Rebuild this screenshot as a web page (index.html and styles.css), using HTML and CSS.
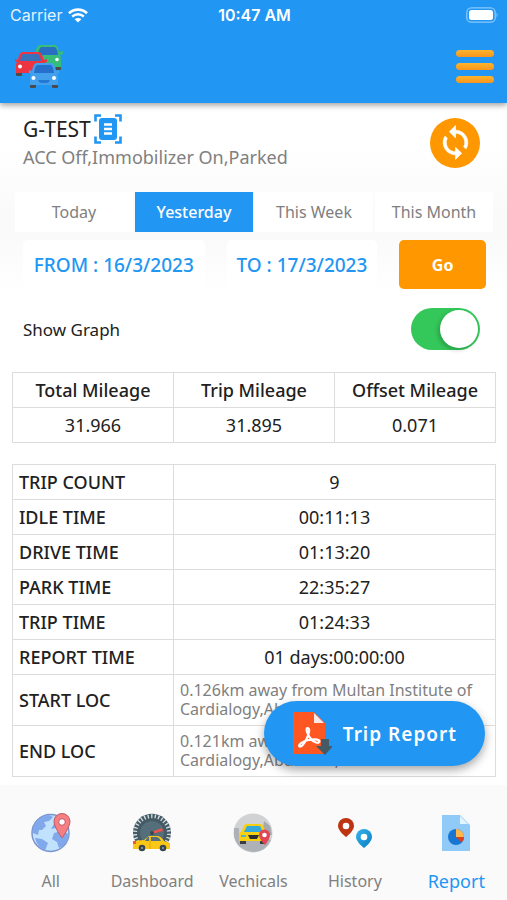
FILE: index.html
```html
<!DOCTYPE html>
<html lang="en">
<head>
<meta charset="utf-8">
<meta name="viewport" content="width=device-width, initial-scale=1">
<title>Trip Report</title>
<link rel="stylesheet" href="styles.css">
</head>
<body>
<header class="header">
  <div class="status">
    <div class="carrier"><span>Carrier</span>
      <svg width="20" height="15" viewBox="0 0 20 15" fill="none" stroke="#fff" stroke-width="2.6"><path d="M1 5.2a13 13 0 0 1 18 0M4.2 8.6a8.4 8.4 0 0 1 11.6 0"/><path d="M10 14.6 6.7 11.300a4.700 4.700 0 0 1 6.600 0z" fill="#fff" stroke="none"/></svg>
    </div>
    <span class="clock">10:47 AM</span>
    <svg class="battery" width="33" height="16" viewBox="0 0 33 16"><rect x=".8" y=".8" width="28.400" height="14.400" rx="4.500" fill="none" stroke="#8bc8fa" stroke-width="1.300"/><rect x="3" y="3" width="24" height="10" rx="2.500" fill="#fff"/><path d="M30.500 5.500q2 2.500 0 5z" fill="#8bc8fa"/></svg>
  </div>
  <div class="appbar">
    <svg width="50" height="44" viewBox="0 0 50 44">
      <g fill="#36bd79"><path d="M25 0h15q3 0 4 7l4-1v3l-3 1q1 2 1 5v10H26L20 10q1-10 5-10z"/></g>
      <path d="M26 2h14q2 1 3 8H23q1-7 3-8z" fill="#286fc4"/>
      <rect x="40" y="22" width="6" height="3" rx="1" fill="#4a4a4a"/><circle cx="42" cy="14.500" r="1.800" fill="#fff"/>
      <rect x="1" y="27" width="6" height="4" rx="1" fill="#4a4a4a"/>
      <path d="M7 7h17q3 1 5 8l3-1v3l-3 1v10H1V19l1-2-3-1v-2l4 1q1-7 4-8z" fill="#ed3442"/>
      <path d="M8 9h15q2 1 3 7H5q1-6 3-7z" fill="#3773bd"/><circle cx="5" cy="21.500" r="2" fill="#fff"/>
      <rect x="15" y="39" width="6" height="4" rx="1" fill="#4a4a4a"/><rect x="37" y="39" width="6" height="4" rx="1" fill="#4a4a4a"/>
      <path d="M21 18h16q3 1 4 8l3-1v3l-2 1 1 3v8H15v-8l1-3-2-1v-3l3 1q1-7 4-8z" fill="#42a0ed"/>
      <path d="M22 20h14q2 1 3 8H19q1-7 3-8z" fill="#2670cc"/><circle cx="18.500" cy="33" r="2" fill="#fff"/><circle cx="39" cy="33" r="2" fill="#fff"/><path d="M23 35h12q-1 3-3 3h-6q-2 0-3-3z" fill="#2478d4"/>
    </svg>
    <button class="menu" aria-label="Menu"><span></span><span></span><span></span></button>
  </div>
</header>

<main class="content">
  <section class="vehicle">
    <div>
      <h1>G-TEST
        <svg width="28" height="30" viewBox="0 0 28 30"><path d="M1.500 7.500v-6H7M21 1.500h5.500v6M26.500 22.500v6H21M7 28.500H1.500v-6" fill="none" stroke="#2196f3" stroke-width="2.600"/><rect x="5" y="4" width="18" height="22" rx="3" fill="#2196f3"/><path d="M10 10.500h8M10 15h8M10 19.500h8" stroke="#fff" stroke-width="2.400"/></svg>
      </h1>
      <p>ACC Off,Immobilizer On,Parked</p>
    </div>
    <button class="refresh" aria-label="Refresh">
      <svg width="37" height="37" viewBox="0 0 24 24" fill="#fff" stroke="#fff" stroke-width=".4"><path d="M12 4V1L8 5l4 4V6c3.310 0 6 2.690 6 6 0 1.010-.25 1.970-.7 2.800l1.460 1.460C19.540 15.030 20 13.570 20 12c0-4.420-3.580-8-8-8zm0 14c-3.310 0-6-2.690-6-6 0-1.010.25-1.970.7-2.800L5.240 7.740C4.460 8.970 4 10.430 4 12c0 4.420 3.580 8 8 8v3l4-4-4-4v3z"/></svg>
    </button>
  </section>

  <div class="tabs">
    <button>Today</button>
    <button class="on">Yesterday</button>
    <button>This Week</button>
    <button>This Month</button>
  </div>

  <div class="dates">
    <button class="date from">FROM : 16/3/2023</button>
    <button class="date">TO : 17/3/2023</button>
    <button class="go">Go</button>
  </div>

  <div class="graph">
    <label for="graph">Show Graph</label>
    <input class="switch" type="checkbox" id="graph" checked>
  </div>

  <table class="mileage">
    <thead><tr><th>Total Mileage</th><th>Trip Mileage</th><th>Offset Mileage</th></tr></thead>
    <tbody><tr><td>31.966</td><td>31.895</td><td>0.071</td></tr></tbody>
  </table>

  <table class="summary">
    <tbody>
      <tr><th>TRIP COUNT</th><td>9</td></tr>
      <tr><th>IDLE TIME</th><td>00:11:13</td></tr>
      <tr><th>DRIVE TIME</th><td>01:13:20</td></tr>
      <tr><th>PARK TIME</th><td>22:35:27</td></tr>
      <tr><th>TRIP TIME</th><td>01:24:33</td></tr>
      <tr><th>REPORT TIME</th><td>01 days:00:00:00</td></tr>
      <tr><th>START LOC</th><td class="place">0.126km away from Multan Institute of<br>Cardialogy,Abdali Rd,</td></tr>
      <tr><th>END LOC</th><td class="place">0.121km away from Multan Institute of<br>Cardialogy,Abdali Rd,</td></tr>
    </tbody>
  </table>

  <button class="fab">
    <svg width="40" height="46" viewBox="0 0 40 46"><path d="M1 1h21l11 11v31H1z" fill="#ff5722"/><path d="M22 2v10h10z" fill="#fbe9e7"/><path d="M15.500 17c3 0 1.500 6-1 11-2 4-5 8-7 7.500-2-2 4-5.500 9-6.500 5-1.200 11-1 11 1.500-.5 2.500-6 1-9-3-2.500-3-5.500-10.500-3-10.500z" fill="none" stroke="#fff" stroke-width="2.200"/><path d="M29 28h8v7h4l-8 9-9-9h5z" fill="#455a64"/></svg>
    <span>Trip Report</span>
  </button>
</main>

<nav class="nav">
  <a href="#all">
    <svg width="40" height="40" viewBox="0 0 40 40"><circle cx="19.500" cy="20" r="18.500" fill="#c1e2fd" stroke="#7994cf" stroke-width="1.500"/><path d="M5 9q6-7 13-7l4 2-4 4-5 1 2 4-4 4H8l-1 5-5-2q-1-6 3-11zM4 25l7 1 6 4-2 5-1 3Q6 34 4 25zM24 4l7 4-6 7-5 1 3-5zM23 20l7-2 8 3q0 7-6 12l-4 2-2-6-5-3z" fill="#80a8eb"/><path d="M31 25S23 14 23 8.500a8 8 0 0 1 16 0C39 14 31 25 31 25z" fill="#f77f83" stroke="#be5966"/><circle cx="31" cy="9" r="3.300" fill="#fff" stroke="#be5966"/></svg>
    <span>All</span></a>
  <a href="#dashboard">
    <svg width="40" height="40" viewBox="0 0 40 40"><path d="M4 30A19 19 0 1 1 36 30z" fill="#455a64"/><path d="M5.500 29A17 17 0 1 1 34.500 29" fill="none" stroke="#d5e0e5" stroke-width="4" stroke-dasharray="1.300 2.200"/><circle cx="20" cy="20" r="12" fill="#546e7a"/><path d="m19 19 11-4 1 3-11 3z" fill="#e9534f"/><circle cx="20" cy="20" r="2" fill="#37474f"/><path d="M1 28l11-1 5-4h9q4 1 6 5l6 2v6H1z" fill="#fbc716"/><path d="M16 24h1v4h-4zM19 24h6q3 1 4 4H19z" fill="#546e7a"/><path d="M18 24v12" stroke="#e2a70b"/><path d="M1 28h3v3H1z" fill="#ef5b38"/><circle cx="10" cy="35" r="3.300" fill="#37474f"/><circle cx="31" cy="35" r="3.300" fill="#37474f"/><circle cx="10" cy="35" r="1" fill="#90a4ae"/><circle cx="31" cy="35" r="1" fill="#90a4ae"/></svg>
    <span>Dashboard</span></a>
  <a href="#vehicles">
    <svg width="40" height="40" viewBox="0 0 40 40"><circle cx="20" cy="20" r="19.500" fill="#d0d2d4"/><path d="M1 15h5v11h28l4 1Q33 39 20 39 4 37 1 23z" fill="#aeb2b6"/><path d="M31 8l6 5 2 9H29z" fill="#a5a9ad"/><path d="M7 27h6v4H7zM27 27h6v4h-6z" fill="#393e46"/><path d="M13 11h15q3 1 4 8l2 2v7H6v-8l3-2q1-6 4-7z" fill="#f9cf13"/><path d="M14 13h13l3 6H11z" fill="#34a9dc"/><path d="M8 22h5v2H8z" fill="#4bb4d6"/><path d="M15 22h11l-2 4h-7z" fill="#292d34"/><path d="M32 32s-6-6-6-10a5 5 0 0 1 11 0c0 4-5 10-5 10z" fill="#e24455"/><circle cx="31.500" cy="22" r="2.300" fill="#fff"/></svg>
    <span>Vechicals</span></a>
  <a href="#history">
    <svg width="40" height="40" viewBox="0 0 40 40"><defs><linearGradient id="b" x2="1" y2="1"><stop stop-color="#35b4ec"/><stop offset="1" stop-color="#087dc4"/></linearGradient></defs><path d="M11 24s-8-6-8-11a8 8 0 0 1 16 0c0 5-8 11-8 11z" fill="#bd3410"/><circle cx="11" cy="13" r="3.300" fill="#fff"/><path d="M29 35s-8-6-8-11a8 8 0 0 1 16 0c0 5-8 11-8 11z" fill="url(#b)"/><circle cx="29" cy="24" r="3.300" fill="#fff"/></svg>
    <span>History</span></a>
  <a href="#report" class="current">
    <svg width="40" height="40" viewBox="0 0 40 40"><path d="M6 2h18l10 10v26H6z" fill="#90caf9"/><path d="M24 3v8h8z" fill="#e1f5fe"/><circle cx="20" cy="24" r="8" fill="#1976d2"/><path d="M20 24v-8a8 8 0 0 1 8 8z" fill="#ffb74d"/><path d="M20 24h8a8 8 0 0 1-2.400 5.600z" fill="#dd3f18"/></svg>
    <span>Report</span></a>
</nav>
</body>
</html>
```
FILE: styles.css
```css
* { box-sizing: border-box; }
body {
  margin: 0;
  min-height: 100vh;
  display: flex;
  flex-direction: column;
  background: #fff;
  color: #212121;
  font-family: "Noto Sans", "Open Sans", sans-serif;
  font-size: 17px;
}
button { border: 0; padding: 0; font: inherit; cursor: pointer; }
svg { display: block; }

.header {
  position: relative;
  z-index: 1;
  background: #2196f3;
  box-shadow: 0 2px 6px rgba(0, 0, 0, .4);
}
.status {
  display: grid;
  grid-template-columns: 1fr auto 1fr;
  align-items: center;
  height: 30px;
  padding: 0 8px 0 10px;
  color: #fff;
  font: 16px/20px Inter, sans-serif;
}
.carrier { display: flex; align-items: center; gap: 6px; color: #e3f2fd; }
.clock { font-weight: 600; }
.battery { justify-self: end; }
.appbar {
  display: flex;
  align-items: center;
  justify-content: space-between;
  height: 73px;
  padding: 0 13px 0 15px;
}
.menu { display: grid; gap: 6px; background: none; }
.menu span {
  width: 38px;
  height: 7px;
  border-radius: 4px;
  background: linear-gradient(#ffb52b, #f7941d);
}

.content {
  position: relative;
  padding: 11px 11px 8px 12px;
  background: linear-gradient(#fff 40px, #fafafa 110px, #fafafa 135px, #fff 190px);
}
.vehicle {
  display: flex;
  align-items: center;
  justify-content: space-between;
  padding: 0 16px 0 11px;
  margin-bottom: 21px;
}
.vehicle h1 {
  display: flex;
  align-items: center;
  gap: 3px;
  margin: 0;
  font-size: 21px;
  font-weight: 400;
  line-height: 30px;
}
.vehicle p { margin: 0; color: #808080; font-size: 18px; line-height: 27px; }
.refresh {
  display: grid;
  place-items: center;
  width: 50px;
  height: 50px;
  border-radius: 50%;
  background: #ff9800;
}
.tabs { display: grid; grid-template-columns: repeat(4, 1fr); gap: 2px; padding: 0 3px; }
.tabs button { height: 40px; background: #fff; color: #808080; font-size: 16px; }
.tabs .on { background: #2196f3; color: #fff; font-weight: 500; }

.dates {
  display: grid;
  grid-template-columns: 182fr 151fr 87fr;
  column-gap: 22px;
  padding: 0 10px 0 11px;
  margin-top: 8px;
}
.date { height: 49px; border-radius: 5px; background: #fff; color: #2196f3; font-size: 19px; font-weight: 500; white-space: nowrap; }
.go { height: 49px; border-radius: 5px; background: #ff9800; color: #fff; font-size: 16px; font-weight: 700; }

.graph {
  display: flex;
  align-items: center;
  justify-content: space-between;
  padding: 0 16px 0 11px;
  margin: 19px 0 22px;
}
.switch {
  appearance: none;
  width: 69px;
  height: 42px;
  margin: 0;
  padding: 2px;
  border-radius: 21px;
  background: #34c759;
}
.switch::before {
  content: "";
  display: block;
  width: 38px;
  height: 38px;
  border-radius: 50%;
  background: #fff;
  box-shadow: -2px 2px 4px rgba(0, 0, 0, .2);
}
.switch:checked::before { margin-left: auto; }

table { width: 100%; border-collapse: collapse; table-layout: fixed; font-size: 18px; line-height: 24px; }
th, td { height: 35px; padding: 0; border: 1px solid #dcdcdc; text-align: center; font-weight: 400; }
th { font-weight: 500; }
.summary { margin-top: 21px; }
.summary th { width: 33.333%; padding-left: 6px; text-align: left; }
.summary .place { height: 51px; padding-left: 6px; text-align: left; color: #808080; font-size: 16px; line-height: 19px; }

.fab {
  position: absolute;
  right: 22px;
  bottom: 19px;
  display: flex;
  align-items: center;
  gap: 11px;
  height: 65px;
  padding: 0 28px;
  border-radius: 33px;
  background: #2196f3;
  box-shadow: 0 4px 10px rgba(0, 0, 0, .35);
  color: #fff;
  font-size: 19px;
  font-weight: 600;
  letter-spacing: 1px;
}

.nav {
  flex: 1;
  display: grid;
  grid-template-columns: repeat(5, 1fr);
  min-height: 115px;
  background: #fafafa;
}
.nav a {
  display: flex;
  flex-direction: column;
  align-items: center;
  gap: 16px;
  padding-top: 28px;
  color: #808080;
  font-size: 16px;
  line-height: 24px;
  text-decoration: none;
}
.nav .current { color: #2196f3; font-size: 18px; }
```
